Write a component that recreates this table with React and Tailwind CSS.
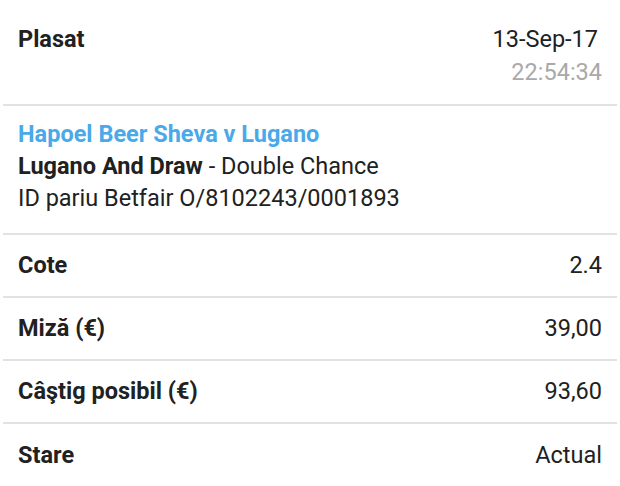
const rows = [
  { label: "Cote", value: "2.4" },
  { label: "Miză (€)", value: "39,00" },
  { label: "Câştig posibil (€)", value: "93,60" },
  { label: "Stare", value: "Actual", last: true },
];

function Row({ label, value, last }) {
  return (
    <div
      className={`flex h-[63px] items-center justify-between px-[15px] ${
        last ? "" : "border-b-2 border-[#e2e2e2]"
      }`}
    >
      <span className="font-bold">{label}</span>
      <span>{value}</span>
    </div>
  );
}

export default function App() {
  return (
    <div
      className="min-h-[486px] w-[620px] bg-white px-[3px] text-[23.5px] text-[#212121]"
      style={{ fontFamily: "Roboto, 'Liberation Sans', sans-serif" }}
    >
      <div className="flex h-[106px] justify-between border-b-2 border-[#e2e2e2] px-[15px] pt-[23px] leading-[33px]">
        <span className="font-bold">Plasat</span>
        <div className="flex flex-col items-end">
          <span className="pr-[4px]">13-Sep-17</span>
          <span className="text-[#a9a9a9]">22:54:34</span>
        </div>
      </div>

      <div className="h-[129px] border-b-2 border-[#e2e2e2] px-[15px] pt-[12px] leading-[32px]">
        <div className="font-bold text-[#4aa9e9]">Hapoel Beer Sheva v Lugano</div>
        <div>
          <span className="font-bold">Lugano And Draw</span> - Double Chance
        </div>
        <div>ID pariu Betfair O/8102243/0001893</div>
      </div>

      {rows.map((r) => (
        <Row key={r.label} {...r} />
      ))}
    </div>
  );
}
